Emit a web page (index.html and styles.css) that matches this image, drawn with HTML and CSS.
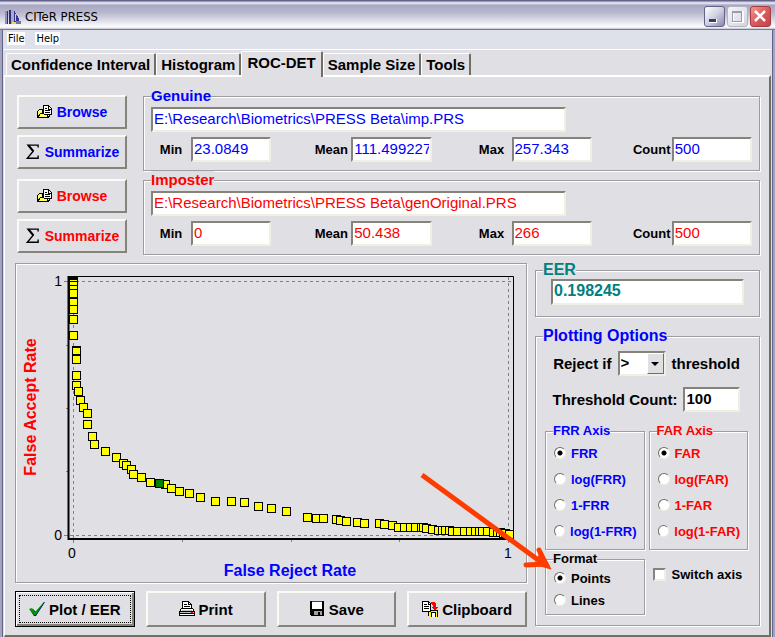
FILE: index.html
```
<!DOCTYPE html>
<html lang="en">
<head>
    <meta charset="UTF-8">
    <meta name="viewport" content="width=device-width, initial-scale=1.0">
    <title>CITeR PRESS</title>
    <link rel="stylesheet" href="styles.css">
</head>
<body>
    <!-- shared icons -->
    <svg class="sprite" aria-hidden="true">
        <symbol id="icon-folder" viewBox="0 0 16 14" shape-rendering="crispEdges">
            <path d="M.500 12.500V6.500l2-2h3v3h9l-3 5z" fill="#ffff66" stroke="#000"/>
            <path d="M6.500 9.500V.500h5l3 3v6z" fill="#fff" stroke="#000"/>
            <path d="M11.500 1v3h3M8 3.500h2M8 5.500h5M8 7.500h5" fill="none" stroke="#000"/>
            <path d="M.500 12.500l3-4h3l1 1h4l-2 3z" fill="#ffff66" stroke="#000"/>
        </symbol>
        <symbol id="icon-sigma" viewBox="0 0 12 14">
            <path d="M10.500 3V1H1.500L6 6.500 1 12.500h9.500V10" fill="none" stroke="#000" stroke-width="1.200"/>
            <path d="M2 1l4.500 5.500" stroke="#000" stroke-width="1.600"/>
        </symbol>
    </svg>

    <div class="window">
        <header class="title-bar">
            <svg class="app-icon" viewBox="0 0 16 16" shape-rendering="crispEdges">
                <path d="M0 2h3v13H0z" fill="#8f8fb8"/>
                <path d="M2 2h1v13H2zM4 1h2v14H4z" fill="#30306a"/>
                <path d="M6 0h3v15H6z" fill="#a9a9cc"/>
                <path d="M9 1l5 9v3H9z" fill="#34349a"/>
                <path d="M10 5h1v7h-1z" fill="#c8c8e8"/>
                <path d="M11 12h5v3h-5z" fill="#77778c"/>
                <path d="M7 13h4v2H7z" fill="#e8d850"/>
            </svg>
            <h1>CITeR PRESS</h1>
            <div class="window-buttons">
                <button class="window-button" aria-label="Minimize">
                    <svg viewBox="0 0 19 19" shape-rendering="crispEdges"><path d="M4 12h7v3H4z" fill="#3c3c66"/><path d="M4 15.500h7.500V12" fill="none" stroke="#fff"/></svg>
                </button>
                <button class="window-button maximize" aria-label="Maximize" disabled>
                    <svg viewBox="0 0 19 19" shape-rendering="crispEdges"><path d="M5 5h10v10H5z" fill="none" stroke="#fff" stroke-width="2"/><path d="M4.500 5.500h9v9h-9zM4 4.500h10" fill="none" stroke="#9b9baa"/></svg>
                </button>
                <button class="window-button close" aria-label="Close">
                    <svg viewBox="0 0 19 19"><path d="M4 4l10 10M14 4L4 14" stroke="#fff" stroke-width="2.600"/></svg>
                </button>
            </div>
        </header>

        <nav class="menu-bar">
            <button>File</button>
            <button>Help</button>
        </nav>

        <div class="tabs" role="tablist">
            <button class="tab" role="tab">Confidence Interval</button>
            <button class="tab" role="tab">Histogram</button>
            <button class="tab active" role="tab" aria-selected="true">ROC-DET</button>
            <button class="tab" role="tab">Sample Size</button>
            <button class="tab" role="tab">Tools</button>
        </div>

        <main class="page">
            <section class="dataset blue">
                <div class="side-buttons">
                    <button class="button"><svg class="icon" aria-hidden="true"><use href="#icon-folder"/></svg>Browse</button>
                    <button class="button summarize"><svg class="icon" aria-hidden="true"><use href="#icon-sigma"/></svg>Summarize</button>
                </div>
                <fieldset>
                    <legend>Genuine</legend>
                    <input class="field path" type="text" aria-label="Genuine file" value="E:\Research\Biometrics\PRESS Beta\imp.PRS">
                    <div class="stats">
                        <div class="stat"><label for="gen-min">Min</label><input class="field" id="gen-min" type="text" value="23.0849"></div>
                        <div class="stat"><label for="gen-mean">Mean</label><input class="field" id="gen-mean" type="text" value="111.499227"></div>
                        <div class="stat"><label for="gen-max">Max</label><input class="field" id="gen-max" type="text" value="257.343"></div>
                        <div class="stat"><label for="gen-count">Count</label><input class="field" id="gen-count" type="text" value="500"></div>
                    </div>
                </fieldset>
            </section>

            <section class="dataset red">
                <div class="side-buttons">
                    <button class="button"><svg class="icon" aria-hidden="true"><use href="#icon-folder"/></svg>Browse</button>
                    <button class="button summarize"><svg class="icon" aria-hidden="true"><use href="#icon-sigma"/></svg>Summarize</button>
                </div>
                <fieldset>
                    <legend>Imposter</legend>
                    <input class="field path" type="text" aria-label="Imposter file" value="E:\Research\Biometrics\PRESS Beta\genOriginal.PRS">
                    <div class="stats">
                        <div class="stat"><label for="imp-min">Min</label><input class="field" id="imp-min" type="text" value="0"></div>
                        <div class="stat"><label for="imp-mean">Mean</label><input class="field" id="imp-mean" type="text" value="50.438"></div>
                        <div class="stat"><label for="imp-max">Max</label><input class="field" id="imp-max" type="text" value="266"></div>
                        <div class="stat"><label for="imp-count">Count</label><input class="field" id="imp-count" type="text" value="500"></div>
                    </div>
                </fieldset>
            </section>

            <div class="workspace">
                <section class="plot-column">
                    <div class="chart">
                        <svg viewBox="16 264 510 318" role="img" aria-label="ROC curve">
                            <defs>
                                <marker id="point" markerWidth="10" markerHeight="10" refX="5" refY="5" markerUnits="userSpaceOnUse">
                                    <rect x="1" y="1" width="8" height="8" fill="#ffff00" stroke="#000"/>
                                </marker>
                            </defs>
                            <g class="grid">
                                <path d="M73.500 277v261M508.500 277v261M70 281.500h443M70 535.500h443"/>
                            </g>
                            <path class="ticks" d="M64 281.500h4M66 345.500h2M66 408.500h2M66 471.500h2M64 535.500h4M73.500 540v3M182.500 540v2M291.500 540v2M399.500 540v2M508.500 540v3"/>
                            <path d="M68 276.500h445.500V538" fill="none" stroke="#000"/>
                            <path d="M68.500 276v263H514" fill="none" stroke="#000" stroke-width="2"/>
                            <polyline class="points" points="73.500,281.500 73.500,285.500 73.500,289.500 73.500,293.500 73.500,301.500 73.500,302.500 73.500,309.500 73.500,319.500 73.500,335.500 76.500,350.500 76.500,351.500 76.500,358.500 76.500,359.500 76.500,375.500 76.500,385.500 78.500,391.500 80.500,400.500 83.500,407.500 87.500,413.500 87.500,424.500 92.500,436.500 94.500,444.500 105.500,451.500 116.500,457.500 123.500,463.500 126.500,465.500 131.500,469.500 133.500,474.500 141.500,477.500 150.500,482.500 159.500,483.500 165.500,484.500 171.500,488.500 179.500,491.500 189.500,493.500 200.500,497.500 215.500,501.500 231.500,501.500 244.500,502.500 258.500,506.500 271.500,508.500 286.500,511.500 307.500,517.500 316.500,518.500 323.500,518.500 336.500,519.500 340.500,520.500 346.500,521.500 357.500,522.500 364.500,523.500 379.500,523.500 384.500,524.500 392.500,525.500 398.500,527.500 404.500,527.500 410.500,527.500 415.500,527.500 421.500,527.500 423.500,527.500 426.500,528.500 432.500,529.500 438.500,530.500 442.500,530.500 445.500,530.500 449.500,530.500 452.500,531.500 457.500,531.500 464.500,531.500 470.500,531.500 475.500,531.500 479.500,531.500 482.500,531.500 487.500,531.500 493.500,532.500 497.500,532.500 500.500,532.500 503.500,533.500 505.500,533.500 509.500,534.500"/>
                            <path d="M68 276h10v4H68z"/>
                            <rect x="155.500" y="479.500" width="8" height="8" fill="#008000" stroke="#000"/>
                            <text x="62" y="286" text-anchor="end">1</text>
                            <text x="62" y="540" text-anchor="end">0</text>
                            <text x="72" y="558" text-anchor="middle">0</text>
                            <text x="508" y="558" text-anchor="middle">1</text>
                            <text class="axis-title blue" x="290" y="576" text-anchor="middle">False Reject Rate</text>
                            <text class="axis-title red" transform="translate(36 407) rotate(-90)" text-anchor="middle">False Accept Rate</text>
                        </svg>
                    </div>

                    <div class="actions">
                        <button class="button default">
                            <svg class="icon" viewBox="0 0 16 16" aria-hidden="true">
                                <path d="M1 9l3-1 3 3 8-10h1L7 15H5z" fill="#000080"/>
                                <path d="M0 8l3-1 3 4 9-10L7 14H5z" fill="#009a00"/>
                            </svg>Plot / EER
                        </button>
                        <button class="button">
                            <svg class="icon" viewBox="0 0 16 16" shape-rendering="crispEdges" aria-hidden="true">
                                <path d="M3.500 8V.500h6l3 3V8" fill="#fff" stroke="#000"/>
                                <path d="M9.500 .500v3h3M5 3.500h3M5 5.500h6" fill="none" stroke="#000"/>
                                <path d="M.500 10.500l2-3h11l2 3v4H.500z" fill="#fff" stroke="#000"/>
                                <path d="M1 11h14v1H1zM3 9h10v1H3z" fill="#c0c0c0"/>
                                <path d="M1 10.500h14M1 12.500h14" stroke="#000"/>
                                <path d="M12 11h2v1h-2z" fill="#f00"/>
                            </svg>Print
                        </button>
                        <button class="button">
                            <svg class="icon" viewBox="0 0 16 16" shape-rendering="crispEdges" aria-hidden="true">
                                <path d="M1 0h14v15H2l-1-1z"/>
                                <path d="M3 1h10v7H3z" fill="#fff"/>
                                <path d="M3 0h10v1H3z" fill="#e00000"/>
                                <path d="M5 10h8v4H5z" fill="#a0a0a0"/>
                                <path d="M9 11h2v3H9z"/>
                            </svg>Save
                        </button>
                        <button class="button">
                            <svg class="icon" viewBox="0 0 16 16" shape-rendering="crispEdges" aria-hidden="true">
                                <path d="M7 9h9v7H7z" fill="#ffff00"/>
                                <path d="M6.500 15V9.500h9V16M9.500 16v-4.500h4V16" fill="none" stroke="#000"/>
                                <path d="M10 12h3v4h-3z" fill="#fff"/>
                                <path d="M.500 .500h6l2 2v8h-8z" fill="#fff" stroke="#000"/>
                                <path d="M2 3.500h3M2 5.500h5M2 7.500h5M6.500 1v2h2" fill="none" stroke="#000"/>
                                <path d="M9 1h3l2 2v3h2l-3 4-4-4h2V4L9 3z" fill="#f00"/>
                            </svg>Clipboard
                        </button>
                    </div>
                </section>

                <section class="options-column">
                    <fieldset class="eer">
                        <legend>EER</legend>
                        <input class="field" type="text" aria-label="EER" value="0.198245">
                    </fieldset>

                    <fieldset class="options">
                        <legend>Plotting Options</legend>
                        <div class="option-rows">
                            <div class="option-row">
                                <label for="reject-if">Reject if</label>
                                <span class="combo">
                                    <select class="field" id="reject-if">
                                        <option>&gt;</option>
                                        <option>&lt;</option>
                                    </select>
                                    <span class="combo-arrow"></span>
                                </span>
                                <span>threshold</span>
                            </div>
                            <div class="option-row">
                                <label for="threshold-count">Threshold Count:</label>
                                <input class="field count" id="threshold-count" type="text" value="100">
                            </div>
                            <div class="option-groups">
                                <fieldset class="group blue">
                                    <legend>FRR Axis</legend>
                                    <label><input type="radio" name="frr" checked>FRR</label>
                                    <label><input type="radio" name="frr">log(FRR)</label>
                                    <label><input type="radio" name="frr">1-FRR</label>
                                    <label><input type="radio" name="frr">log(1-FRR)</label>
                                </fieldset>
                                <fieldset class="group red">
                                    <legend>FAR Axis</legend>
                                    <label><input type="radio" name="far" checked>FAR</label>
                                    <label><input type="radio" name="far">log(FAR)</label>
                                    <label><input type="radio" name="far">1-FAR</label>
                                    <label><input type="radio" name="far">log(1-FAR)</label>
                                </fieldset>
                                <fieldset class="group format">
                                    <legend>Format</legend>
                                    <label><input type="radio" name="format" checked>Points</label>
                                    <label><input type="radio" name="format">Lines</label>
                                    <svg class="pointer-arrow" viewBox="0 0 134 100" aria-hidden="true">
                                        <path d="M3 4l119 87" stroke-width="5"/>
                                        <path d="M120 79l7 14-20 1" stroke-width="5" stroke-linecap="round"/>
                                        <path d="M121 79l11 19-14-4z" stroke-width="1"/>
                                    </svg>
                                </fieldset>
                                <label class="switch-axis"><input type="checkbox">Switch axis</label>
                            </div>
                        </div>
                    </fieldset>
                </section>
            </div>
        </main>
    </div>
</body>
</html>
```
FILE: styles.css
```
* {
    box-sizing: border-box;
}

body {
    margin: 0;
    background-color: #e0dfe3;
    color: #000;
    font-family: "Liberation Sans", Arial, sans-serif;
    font-size: 15px;
    font-weight: bold;
}

button, input, select {
    font: inherit;
    color: inherit;
}

.sprite {
    display: none;
}

.blue {
    color: #0000ff;
}

.red {
    color: #ff0000;
}

/* Window frame */
.window {
    display: flex;
    flex-direction: column;
    min-height: 100vh;
    border: 2px solid #a4a3be;
    border-top: 0;
    box-shadow: inset 1px 0 0 #62628a, inset -1px 0 0 #62628a;
    padding: 0 2px;
}

.title-bar {
    display: flex;
    align-items: center;
    gap: 4px;
    height: 30px;
    margin: 0 -4px;
    padding: 3px 4px 0 5px;
    border-top: 1px solid #62628a;
    border-bottom: 1px solid #77779a;
    background: linear-gradient(#8080a0 0, #f4f4fa 2px, #a9a8c4 4px, #b9b8cf 12px, #e4e4ee 21px, #fff 26px, #c0c0d0 28px);
}

.app-icon {
    width: 16px;
    height: 16px;
}

h1 {
    flex: 1;
    margin: 0;
    font-family: "DejaVu Sans Condensed", "DejaVu Sans", sans-serif;
    font-size: 13px;
    font-weight: normal;
}

.window-buttons {
    display: flex;
    gap: 2px;
}

.window-button {
    width: 21px;
    height: 21px;
    padding: 0;
    border: 1px solid #62628a;
    border-radius: 3px;
    background: linear-gradient(135deg, #fff, #d0d0e0 50%, #8888ac);
}

.window-button svg {
    display: block;
    width: 19px;
    height: 19px;
}

.window-button.maximize {
    border-color: #b4b4c4;
    background: linear-gradient(135deg, #f4f4f8, #d4d4e0);
}

.window-button.close {
    border-color: #a83a44;
    background: linear-gradient(135deg, #f09a94, #dc5a5a 50%, #c0444c);
}

.menu-bar {
    display: flex;
    align-items: flex-start;
    gap: 10px;
    height: 20px;
    padding: 2px 3px;
    border-bottom: 1px solid #fff;
    background-color: #dee1e9;
}

.menu-bar button {
    padding: 0 1px;
    border: 0;
    background-color: #fff;
    font-family: "DejaVu Sans Condensed", "DejaVu Sans", sans-serif;
    font-size: 11px;
    font-weight: normal;
    line-height: 13px;
}

/* Tabs */
.tabs {
    display: flex;
    align-items: flex-end;
    height: 25px;
    padding-left: 2px;
}

.tab {
    height: 22px;
    padding: 0 4px;
    border: solid;
    border-width: 1px 2px 0 1px;
    border-color: #fff #716f64 #fff #fff;
    border-radius: 2px 2px 0 0;
    background-color: #e0dfe3;
    line-height: 20px;
}

.tab.active {
    position: relative;
    height: 26px;
    margin-bottom: -2px;
    padding: 0 5px 3px;
}

.page {
    flex: 1;
    padding: 10px 9px 8px 10px;
    border: solid;
    border-width: 2px 2px 2px 1px;
    border-color: #fff #716f64 #716f64 #fff;
}

/* Shared controls */
fieldset {
    min-width: 0;
    margin: 0;
    padding: 0 7px;
    border: 1px solid #9d9da1;
    box-shadow: 1px 1px 0 #fff, inset 1px 1px 0 #fff;
}

legend {
    padding: 0;
    background-color: #e0dfe3;
    line-height: 18px;
}

.field {
    display: block;
    width: 100%;
    height: 25px;
    padding: 0 1px 2px;
    border: 2px solid;
    border-color: #85837a #f1efe2 #f1efe2 #85837a;
    border-radius: 0;
    background-color: #fff;
}

.button {
    display: flex;
    align-items: center;
    justify-content: center;
    gap: 4px;
    padding: 0;
    border: 2px solid;
    border-color: #fbfaf4 #85837a #85837a #fbfaf4;
    background-color: #e0dfe3;
}

.icon {
    width: 16px;
    height: 16px;
}

/* Genuine and imposter data */
.dataset {
    display: grid;
    grid-template-columns: 110px 1fr;
    gap: 16px;
    padding-left: 2px;
}

.dataset fieldset {
    padding-top: 2px;
    padding-bottom: 8px;
}

.dataset .field {
    font-weight: normal;
}

.dataset .path {
    width: 69%;
    margin-bottom: 5px;
}

.side-buttons {
    display: flex;
    flex-direction: column;
    gap: 6px;
    padding-top: 8px;
}

.side-buttons .button {
    height: 34px;
    color: inherit;
    font-size: 14px;
}

.stats {
    display: grid;
    grid-template-columns: repeat(4, 1fr);
    column-gap: 40px;
}

.stat {
    display: grid;
    grid-template-columns: 40px 1fr;
    align-items: center;
    color: #000;
    font-size: 13px;
}

.stat label {
    text-align: center;
}

.stat .field {
    font-size: 15px;
}

.blue .stat .field {
    color: #0000ff;
}

.red .stat .field {
    color: #ff0000;
}

/* Plot and options */
.workspace {
    display: grid;
    grid-template-columns: 1fr 225px;
    gap: 8px;
    margin-top: 6px;
}

.plot-column {
    display: flex;
    flex-direction: column;
    gap: 8px;
    padding-top: 2px;
}

.chart {
    border: 1px solid #9d9da1;
    box-shadow: 1px 1px 0 #fff, inset 1px 1px 0 #fff;
}

.chart svg {
    display: block;
    width: 100%;
    font-size: 14px;
    font-weight: normal;
}

.grid path {
    fill: none;
    stroke: #808080;
    stroke-dasharray: 3 3;
}

.ticks {
    fill: none;
    stroke: #808080;
}

.points {
    fill: none;
    marker: url(#point);
}

.axis-title {
    fill: currentColor;
    font-size: 16px;
    font-weight: bold;
}

.actions {
    display: grid;
    grid-template-columns: repeat(4, 1fr);
    gap: 11px;
}

.actions .button {
    height: 36px;
}

.actions .default {
    border-color: #000;
    border-width: 1px;
    box-shadow: inset 1px 1px 0 #fff, inset -2px -2px 0 #85837a;
    outline: 1px dotted #000;
    outline-offset: -5px;
}

.options-column {
    display: flex;
    flex-direction: column;
    gap: 10px;
}

.eer {
    padding-bottom: 11px;
    color: #008080;
    font-size: 16px;
}

.eer .field {
    width: calc(100% - 16px);
    height: 26px;
    margin: 0 8px;
}

.options > legend {
    color: #0000ff;
    font-size: 16px;
}

.option-rows {
    display: flex;
    flex-direction: column;
    gap: 11px;
    padding: 6px 4px 10px 2px;
}

.option-row {
    display: flex;
    align-items: center;
    justify-content: center;
    gap: 6px;
}

.combo {
    position: relative;
    width: 48px;
}

.combo .field {
    appearance: none;
}

.combo-arrow {
    position: absolute;
    top: 2px;
    right: 2px;
    display: flex;
    align-items: center;
    justify-content: center;
    width: 17px;
    height: 21px;
    border: 1px solid;
    border-color: #fff #716f64 #716f64 #fff;
    background-color: #e0dfe3;
    pointer-events: none;
}

.combo-arrow::after {
    content: "";
    border: 4px solid transparent;
    border-top-color: #000;
    border-bottom: 0;
}

.count {
    width: 57px;
}

.option-groups {
    display: grid;
    grid-template-columns: 1fr 1fr;
    gap: 1px 4px;
    font-size: 13px;
}

.group {
    padding-top: 1px;
    padding-bottom: 5px;
}

.group legend {
    line-height: 16px;
}

.group label {
    display: flex;
    align-items: center;
    gap: 5px;
    height: 26px;
    padding-left: 1px;
    white-space: nowrap;
}

input[type="radio"] {
    appearance: none;
    width: 12px;
    height: 12px;
    margin: 0;
    border: 1px solid;
    border-color: #716f64 #f1efe2 #f1efe2 #716f64;
    border-radius: 50%;
    background-color: #fff;
}

input[type="radio"]:checked {
    background-image: radial-gradient(circle, #000 2px, transparent 3px);
}

.format {
    position: relative;
    padding-top: 0;
    padding-bottom: 3px;
}

.format label {
    height: 22px;
}

/* Callout that points at the Points option */
.pointer-arrow {
    position: absolute;
    top: -96px;
    left: -127px;
    width: 134px;
    height: 100px;
    fill: #ff3c00;
    stroke: #ff3c00;
    pointer-events: none;
}

.pointer-arrow path:nth-child(2) {
    fill: none;
}

.switch-axis {
    display: flex;
    align-items: center;
    align-self: start;
    gap: 6px;
    padding: 16px 0 0 4px;
    white-space: nowrap;
}

input[type="checkbox"] {
    appearance: none;
    width: 13px;
    height: 13px;
    margin: 0;
    border: 2px solid;
    border-color: #85837a #f1efe2 #f1efe2 #85837a;
    background-color: #fff;
}
```
